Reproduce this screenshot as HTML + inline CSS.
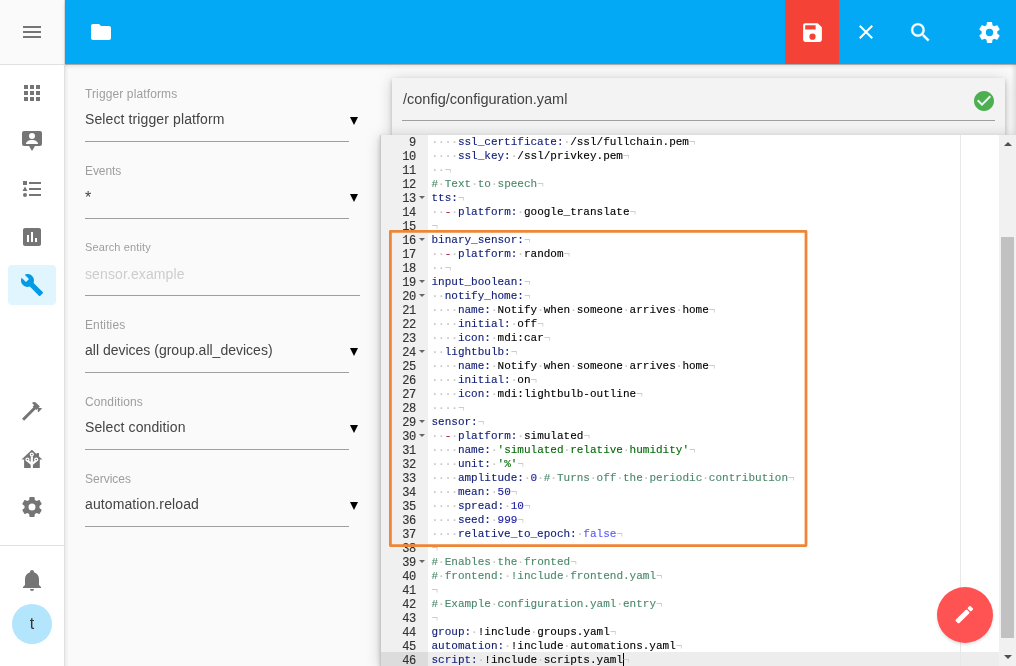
<!DOCTYPE html>
<html><head><meta charset="utf-8">
<style>
*{box-sizing:border-box;margin:0;padding:0}
html,body{width:1016px;height:666px;overflow:hidden;background:#fafafa;font-family:"Liberation Sans",sans-serif;position:relative}
.abs{position:absolute}
body{will-change:transform}
svg.i{position:absolute;width:24px;height:24px}
#side{left:0;top:0;width:65px;height:666px;background:#fff;border-right:1px solid #e0e0e0}
#sidehead{left:0;top:0;width:64px;height:65px;background:#fafafa;border-bottom:1px solid #e0e0e0}
#top{left:65px;top:0;width:951px;height:64px;background:#03a9f4;box-shadow:0 1px 0 rgba(0,0,0,.25),0 2px 4px rgba(0,0,0,.12)}
.lbl{position:absolute;left:85px;font-size:12px;color:#9e9e9e;white-space:nowrap;letter-spacing:0.12px}
.val{position:absolute;left:85px;font-size:14px;color:#444;white-space:nowrap;letter-spacing:0.11px}
.ul{position:absolute;left:85px;width:264px;height:1px;background:#9e9e9e}
.arr{position:absolute;left:350px;width:0;height:0;border-left:4.5px solid transparent;border-right:4.5px solid transparent;border-top:8px solid #000}
#card{left:392px;top:78px;width:613px;height:57px;background:#f3f3f3;box-shadow:0 2px 4px rgba(0,0,0,.2),0 2px 14px rgba(0,0,0,.18)}
#editor{left:380px;top:135px;width:636px;height:531px;background:#fff;overflow:hidden;border-left:1px solid #c8c8c8;box-shadow:0 2px 4px rgba(0,0,0,.2),0 2px 14px rgba(0,0,0,.18)}
#gutter{left:0;top:0;width:47px;height:531px;background:#f0f0f0}
.code{position:absolute;font-family:"Liberation Mono",monospace;font-size:11px;line-height:14px;white-space:pre;-webkit-text-stroke:0.12px}
#lines{left:50.5px;top:0;color:#000}
#nums{left:0;top:1px;width:34.5px;text-align:right;color:#333;-webkit-text-stroke:0.15px;font-size:12px;letter-spacing:-0.6px}
.fw{position:absolute;left:38px;width:0;height:0;border-left:3px solid transparent;border-right:3px solid transparent;border-top:3px solid #666}
.cur{display:inline-block;width:1px;height:14px;background:#000;vertical-align:top;margin-right:-1px}
.k{color:#14217a}.c{color:#4c886b}.s{color:#036a07}.n{color:#1a1aa0}.e{color:#cccccc;-webkit-text-stroke:0}.b{color:#585cf6}.d{color:#a0103c}.v{color:#c6c6c6;-webkit-text-stroke:0;font-weight:bold}
</style></head><body>
<div id="side" class="abs"></div>
<div id="sidehead" class="abs"></div>
<div class="abs" style="left:65px;top:64px;width:4px;height:602px;background:linear-gradient(to right,#ebebeb,#fafafa)"></div>
<div id="top" class="abs"></div>

<!-- sidebar icons -->
<svg class="i" style="left:20px;top:20px" viewBox="0 0 24 24"><path fill="#757575" d="M3,6H21V8H3V6M3,11H21V13H3V11M3,16H21V18H3V16Z"/></svg>
<svg class="i" style="left:20px;top:81px" viewBox="0 0 24 24"><path fill="#757575" d="M16,20H20V16H16M16,14H20V10H16M10,8H14V4H10M16,8H20V4H16M10,14H14V10H10M4,14H8V10H4M4,20H8V16H4M10,20H14V16H10M4,8H8V4H4V8Z"/></svg>
<svg class="i" style="left:20px;top:128px" viewBox="0 0 24 24"><path fill="#757575" d="M4,3H20A2,2 0 0,1 22,5V16A2,2 0 0,1 20,18H15L12,23L9,18H4A2,2 0 0,1 2,16V5A2,2 0 0,1 4,3Z"/><circle cx="12" cy="8" r="3" fill="#fff"/><path fill="#fff" d="M6,16C6,13.5 9,12 12,12C15,12 18,13.5 18,16Z"/></svg>
<svg class="i" style="left:20px;top:177px" viewBox="0 0 24 24"><path fill="#757575" d="M5,9.5L7.5,14H2.5L5,9.5M3,4H7V8H3V4M5,20A2,2 0 0,0 7,18A2,2 0 0,0 5,16A2,2 0 0,0 3,18A2,2 0 0,0 5,20M9,5V7H21V5H9M9,19H21V17H9V19M9,13H21V11H9V13Z"/></svg>
<svg class="i" style="left:20px;top:225px" viewBox="0 0 24 24"><path fill="#757575" d="M17,17H15V13H17M13,17H11V7H13M9,17H7V10H9M19,3H5C3.89,3 3,3.89 3,5V19A2,2 0 0,0 5,21H19A2,2 0 0,0 21,19V5C21,3.89 20.1,3 19,3Z"/></svg>
<div class="abs" style="left:8px;top:265px;width:48px;height:40px;border-radius:4px;background:#e1f5fe"></div>
<svg class="i" style="left:20px;top:273px" viewBox="0 0 24 24"><path fill="#039be5" d="M22.7,19L13.6,9.9C14.5,7.6 14,4.9 12.1,3C10.1,1 7.1,0.6 4.7,1.7L9,6L6,9L1.6,4.7C0.4,7.1 0.9,10.1 2.9,12.1C4.8,14 7.5,14.5 9.8,13.6L18.9,22.7C19.3,23.1 19.9,23.1 20.3,22.7L22.6,20.4C23.1,20 23.1,19.3 22.7,19Z"/></svg>
<svg class="i" style="left:20px;top:399px" viewBox="0 0 24 24"><path fill="#757575" d="M2,19.63L13.43,8.2L12.72,7.5L14.14,6.07L12,3.89C13.2,2.7 15.09,2.7 16.27,3.89L19.87,7.5L18.45,8.91H21.29L22,9.62L18.45,13.21L17.74,12.5V9.62L16.27,11.04L15.56,10.33L4.13,21.76L2,19.63Z"/></svg>
<svg class="i" style="left:20px;top:447px" viewBox="0 0 24 24"><path fill="#757575" d="M1.5,12.6L11.9,2.8L16.6,7.2V6H19V9.5L22.4,12.6H19.8V21H4.1V12.6Z"/><g stroke="#fff" fill="none"><path stroke-width="2.2" d="M11.8,9.2V21.5M7.5,13.6L11.8,17.4L16.2,13.6"/><circle cx="11.8" cy="7.5" r="1.45" stroke-width="1.3" fill="#757575"/><circle cx="7.45" cy="12.5" r="1.45" stroke-width="1.3" fill="#757575"/><circle cx="16.2" cy="12.5" r="1.45" stroke-width="1.3" fill="#757575"/></g></svg>
<svg class="i" style="left:20px;top:495px" viewBox="0 0 24 24"><path fill="#757575" d="M12,15.5A3.5,3.5 0 0,1 8.5,12A3.5,3.5 0 0,1 12,8.5A3.5,3.5 0 0,1 15.5,12A3.5,3.5 0 0,1 12,15.5M19.43,12.97C19.47,12.65 19.5,12.33 19.5,12C19.5,11.67 19.47,11.34 19.43,11L21.54,9.37C21.73,9.22 21.78,8.95 21.66,8.73L19.66,5.27C19.54,5.05 19.27,4.96 19.05,5.05L16.56,6.05C16.04,5.66 15.5,5.32 14.87,5.07L14.5,2.42C14.46,2.18 14.25,2 14,2H10C9.75,2 9.54,2.18 9.5,2.42L9.13,5.07C8.5,5.32 7.96,5.66 7.44,6.05L4.95,5.05C4.73,4.96 4.46,5.05 4.34,5.27L2.34,8.73C2.21,8.95 2.27,9.22 2.46,9.37L4.57,11C4.53,11.34 4.5,11.67 4.5,12C4.5,12.33 4.53,12.65 4.57,12.97L2.46,14.63C2.27,14.78 2.21,15.05 2.34,15.27L4.34,18.73C4.46,18.95 4.73,19.03 4.95,18.95L7.44,17.94C7.96,18.34 8.5,18.68 9.13,18.93L9.5,21.58C9.54,21.82 9.75,22 10,22H14C14.25,22 14.46,21.82 14.5,21.58L14.87,18.93C15.5,18.67 16.04,18.34 16.56,17.94L19.05,18.95C19.27,19.03 19.54,18.95 19.66,18.73L21.66,15.27C21.78,15.05 21.73,14.78 21.54,14.63L19.43,12.97Z"/></svg>
<div class="abs" style="left:0;top:545px;width:64px;height:1px;background:#e0e0e0"></div>
<svg class="i" style="left:20px;top:568px" viewBox="0 0 24 24"><path fill="#757575" d="M21,19V20H3V19L5,17V11C5,7.9 7.03,5.17 10,4.29C10,4.19 10,4.1 10,4A2,2 0 0,1 12,2A2,2 0 0,1 14,4C14,4.1 14,4.19 14,4.29C16.97,5.17 19,7.9 19,11V17L21,19M14,21A2,2 0 0,1 12,23A2,2 0 0,1 10,21"/></svg>
<div class="abs" style="left:12px;top:604px;width:40px;height:40px;border-radius:50%;background:#b3e5fc;color:#333;font-size:16px;text-align:center;line-height:40px">t</div>
<!-- top bar icons -->
<svg class="i" style="left:89px;top:20px" viewBox="0 0 24 24"><path fill="#fff" d="M10,4H4C2.89,4 2,4.89 2,6V18A2,2 0 0,0 4,20H20A2,2 0 0,0 22,18V8C22,6.89 21.1,6 20,6H12L10,4Z"/></svg>
<div class="abs" style="left:785px;top:0;width:54px;height:64px;background:#f44336"></div>
<svg class="i" style="left:799.5px;top:19.6px;width:25px;height:25px" viewBox="0 0 24 24"><path fill="#fff" d="M15,9H5V5H15M12,19A3,3 0 0,1 9,16A3,3 0 0,1 12,13A3,3 0 0,1 15,16A3,3 0 0,1 12,19M17,3H5C3.89,3 3,3.9 3,5V19A2,2 0 0,0 5,21H19A2,2 0 0,0 21,19V7L17,3Z"/></svg>
<svg class="i" style="left:854px;top:20px" viewBox="0 0 24 24"><path fill="#fff" d="M19,6.41L17.59,5L12,10.59L6.41,5L5,6.41L10.59,12L5,17.59L6.41,19L12,13.41L17.59,19L19,17.59L13.41,12L19,6.41Z"/></svg>
<svg class="i" style="left:907.5px;top:20px;width:25px;height:25px" viewBox="0 0 24 24"><path fill="#fff" stroke="#fff" stroke-width="0.3" d="M9.5,3A6.5,6.5 0 0,1 16,9.5C16,11.11 15.41,12.59 14.44,13.73L14.71,14H15.5L20.5,19L19,20.5L14,15.5V14.71L13.73,14.44C12.59,15.41 11.11,16 9.5,16A6.5,6.5 0 0,1 3,9.5A6.5,6.5 0 0,1 9.5,3M9.5,5C7,5 5,7 5,9.5C5,12 7,14 9.5,14C12,14 14,12 14,9.5C14,7 12,5 9.5,5Z"/></svg>
<svg class="i" style="left:976.5px;top:19.8px;width:25px;height:25px" viewBox="0 0 24 24"><path fill="#fff" d="M12,15.5A3.5,3.5 0 0,1 8.5,12A3.5,3.5 0 0,1 12,8.5A3.5,3.5 0 0,1 15.5,12A3.5,3.5 0 0,1 12,15.5M19.43,12.97C19.47,12.65 19.5,12.33 19.5,12C19.5,11.67 19.47,11.34 19.43,11L21.54,9.37C21.73,9.22 21.78,8.95 21.66,8.73L19.66,5.27C19.54,5.05 19.27,4.96 19.050,5.05L16.56,6.05C16.04,5.66 15.5,5.32 14.87,5.07L14.5,2.42C14.46,2.18 14.25,2 14,2H10C9.75,2 9.54,2.18 9.5,2.42L9.13,5.07C8.5,5.32 7.96,5.66 7.44,6.05L4.95,5.05C4.73,4.96 4.46,5.05 4.34,5.27L2.34,8.73C2.21,8.95 2.27,9.22 2.46,9.37L4.57,11C4.53,11.34 4.5,11.67 4.5,12C4.5,12.330 4.53,12.65 4.57,12.97L2.46,14.63C2.27,14.78 2.21,15.05 2.34,15.27L4.34,18.73C4.46,18.95 4.73,19.03 4.95,18.95L7.44,17.94C7.96,18.34 8.5,18.68 9.13,18.93L9.5,21.58C9.54,21.82 9.75,22 10,22H14C14.25,22 14.46,21.82 14.5,21.58L14.87,18.93C15.5,18.67 16.04,18.34 16.56,17.94L19.05,18.95C19.27,19.03 19.54,18.95 19.66,18.73L21.66,15.27C21.78,15.05 21.73,14.78 21.54,14.63L19.43,12.97Z"/></svg>


<div class="lbl" style="top:87px">Trigger platforms</div>
<div class="val" style="top:111px">Select trigger platform</div>
<div class="arr" style="top:117px"></div>
<div class="ul" style="top:141px"></div>

<div class="lbl" style="top:164px;letter-spacing:-0.1px">Events</div>
<div class="val" style="top:189px;font-size:16px;left:85px">*</div>
<div class="arr" style="top:194px"></div>
<div class="ul" style="top:218px"></div>

<div class="lbl" style="top:241px;font-size:11px">Search entity</div>
<div class="val" style="top:266px;color:#cdcdcd">sensor.example</div>
<div class="ul" style="top:295px;width:275px"></div>

<div class="lbl" style="top:318px">Entities</div>
<div class="val" style="top:342px;letter-spacing:0">all devices (group.all_devices)</div>
<div class="arr" style="top:348px"></div>
<div class="ul" style="top:372px"></div>

<div class="lbl" style="top:395px">Conditions</div>
<div class="val" style="top:419px">Select condition</div>
<div class="arr" style="top:425px"></div>
<div class="ul" style="top:449px"></div>

<div class="lbl" style="top:472px;letter-spacing:0">Services</div>
<div class="val" style="top:496px">automation.reload</div>
<div class="arr" style="top:502px"></div>
<div class="ul" style="top:526px"></div>

<div id="card" class="abs">
  <div class="abs" style="left:11px;top:13px;font-size:14.5px;color:#424242">/config/configuration.yaml</div>
  <div class="abs" style="left:10px;top:42px;width:593px;height:1px;background:#9e9e9e"></div>
  <svg class="i" style="left:580px;top:11px" viewBox="0 0 24 24"><path fill="#4caf50" d="M12,2C6.5,2 2,6.5 2,12S6.5,22 12,22 22,17.5 22,12 17.5,2 12,2M10,17L5,12L6.41,10.59L10,14.17L17.59,6.58L19,8L10,17Z"/></svg>
</div>

<div id="editor" class="abs">
  <div id="gutter" class="abs"><div class="abs" style="left:0;top:517px;width:47px;height:14px;background:#dcdcdc"></div></div>
<div class="abs" style="left:47px;top:517px;width:572px;height:14px;background:rgba(0,0,0,.07)"></div>
<div class="abs" style="left:579px;top:0;width:1px;height:531px;background:#e8e8e8"></div>
<div id="nums" class="code">9
10
11
12
13
14
15
16
17
18
19
20
21
22
23
24
25
26
27
28
29
30
31
32
33
34
35
36
37
38
39
40
41
42
43
44
45
46</div>
<i class="fw" style="top:61px"></i><i class="fw" style="top:103px"></i><i class="fw" style="top:145px"></i><i class="fw" style="top:159px"></i><i class="fw" style="top:215px"></i><i class="fw" style="top:285px"></i><i class="fw" style="top:299px"></i><i class="fw" style="top:425px"></i>
<div id="lines" class="code"><span class="v">····</span><span class="k">ssl_certificate:</span><span class="v">·</span>/ssl/fullchain.pem<span class="e">¬</span>
<span class="v">····</span><span class="k">ssl_key:</span><span class="v">·</span>/ssl/privkey.pem<span class="e">¬</span>
<span class="v">··</span><span class="e">¬</span>
<span class="c">#</span><span class="v">·</span><span class="c">Text</span><span class="v">·</span><span class="c">to</span><span class="v">·</span><span class="c">speech</span><span class="e">¬</span>
<span class="k">tts:</span><span class="e">¬</span>
<span class="v">··</span><span class="d">-</span><span class="v">·</span><span class="k">platform:</span><span class="v">·</span>google_translate<span class="e">¬</span>
<span class="e">¬</span>
<span class="k">binary_sensor:</span><span class="e">¬</span>
<span class="v">··</span><span class="d">-</span><span class="v">·</span><span class="k">platform:</span><span class="v">·</span>random<span class="e">¬</span>
<span class="v">··</span><span class="e">¬</span>
<span class="k">input_boolean:</span><span class="e">¬</span>
<span class="v">··</span><span class="k">notify_home:</span><span class="e">¬</span>
<span class="v">····</span><span class="k">name:</span><span class="v">·</span>Notify<span class="v">·</span>when<span class="v">·</span>someone<span class="v">·</span>arrives<span class="v">·</span>home<span class="e">¬</span>
<span class="v">····</span><span class="k">initial:</span><span class="v">·</span>off<span class="e">¬</span>
<span class="v">····</span><span class="k">icon:</span><span class="v">·</span>mdi:car<span class="e">¬</span>
<span class="v">··</span><span class="k">lightbulb:</span><span class="e">¬</span>
<span class="v">····</span><span class="k">name:</span><span class="v">·</span>Notify<span class="v">·</span>when<span class="v">·</span>someone<span class="v">·</span>arrives<span class="v">·</span>home<span class="e">¬</span>
<span class="v">····</span><span class="k">initial:</span><span class="v">·</span>on<span class="e">¬</span>
<span class="v">····</span><span class="k">icon:</span><span class="v">·</span>mdi:lightbulb-outline<span class="e">¬</span>
<span class="v">····</span><span class="e">¬</span>
<span class="k">sensor:</span><span class="e">¬</span>
<span class="v">··</span><span class="d">-</span><span class="v">·</span><span class="k">platform:</span><span class="v">·</span>simulated<span class="e">¬</span>
<span class="v">····</span><span class="k">name:</span><span class="v">·</span><span class="s">&#x27;simulated</span><span class="v">·</span><span class="s">relative</span><span class="v">·</span><span class="s">humidity&#x27;</span><span class="e">¬</span>
<span class="v">····</span><span class="k">unit:</span><span class="v">·</span><span class="s">&#x27;%&#x27;</span><span class="e">¬</span>
<span class="v">····</span><span class="k">amplitude:</span><span class="v">·</span><span class="n">0</span><span class="v">·</span><span class="c">#</span><span class="v">·</span><span class="c">Turns</span><span class="v">·</span><span class="c">off</span><span class="v">·</span><span class="c">the</span><span class="v">·</span><span class="c">periodic</span><span class="v">·</span><span class="c">contribution</span><span class="e">¬</span>
<span class="v">····</span><span class="k">mean:</span><span class="v">·</span><span class="n">50</span><span class="e">¬</span>
<span class="v">····</span><span class="k">spread:</span><span class="v">·</span><span class="n">10</span><span class="e">¬</span>
<span class="v">····</span><span class="k">seed:</span><span class="v">·</span><span class="n">999</span><span class="e">¬</span>
<span class="v">····</span><span class="k">relative_to_epoch:</span><span class="v">·</span><span class="b">false</span><span class="e">¬</span>
<span class="e">¬</span>
<span class="c">#</span><span class="v">·</span><span class="c">Enables</span><span class="v">·</span><span class="c">the</span><span class="v">·</span><span class="c">fronted</span><span class="e">¬</span>
<span class="c">#</span><span class="v">·</span><span class="c">frontend:</span><span class="v">·</span><span class="c">!include</span><span class="v">·</span><span class="c">frontend.yaml</span><span class="e">¬</span>
<span class="e">¬</span>
<span class="c">#</span><span class="v">·</span><span class="c">Example</span><span class="v">·</span><span class="c">configuration.yaml</span><span class="v">·</span><span class="c">entry</span><span class="e">¬</span>
<span class="e">¬</span>
<span class="k">group:</span><span class="v">·</span>!include<span class="v">·</span>groups.yaml<span class="e">¬</span>
<span class="k">automation:</span><span class="v">·</span>!include<span class="v">·</span>automations.yaml<span class="e">¬</span>
<span class="k">script:</span><span class="v">·</span>!include<span class="v">·</span>scripts.yaml<i class="cur"></i><span class="e">¬</span></div>

</div>


<div class="abs" style="left:1011px;top:64px;width:5px;height:71px;background:linear-gradient(to right,rgba(0,0,0,0),rgba(0,0,0,.1))"></div>
<!-- scrollbar -->
<div class="abs" style="left:999px;top:135px;width:17px;height:531px;background:#f1f1f1"></div>
<div class="abs" style="left:1001px;top:237px;width:13px;height:401px;background:#c1c1c1"></div>
<div class="abs" style="left:1003.5px;top:141.5px;width:0;height:0;border-left:4px solid transparent;border-right:4px solid transparent;border-bottom:4.5px solid #505050"></div>
<div class="abs" style="left:1003.5px;top:654.5px;width:0;height:0;border-left:4px solid transparent;border-right:4px solid transparent;border-top:4.5px solid #505050"></div>
<!-- orange highlight -->
<svg class="abs" style="left:380px;top:220px;width:440px;height:340px" viewBox="0 0 440 340"><rect x="10.4" y="11.4" width="415.6" height="314.2" fill="none" stroke="#ee8637" stroke-width="2.8" stroke-linejoin="round"/></svg>
<!-- FAB -->
<div class="abs" style="left:937px;top:587px;width:56px;height:56px;border-radius:50%;background:#ff5252;box-shadow:0 2px 3px rgba(0,0,0,.12)"></div>
<svg class="abs" style="left:950px;top:600px;width:30px;height:30px" viewBox="0 0 30 30"><rect x="4.45" y="14" width="16.1" height="5" rx="1.2" fill="#fff" transform="rotate(-45 12.5 16.5)"/><rect x="18.45" y="6.2" width="3.9" height="5" rx="1" fill="#fff" transform="rotate(-45 20.3 8.7)"/></svg>
</body></html>
